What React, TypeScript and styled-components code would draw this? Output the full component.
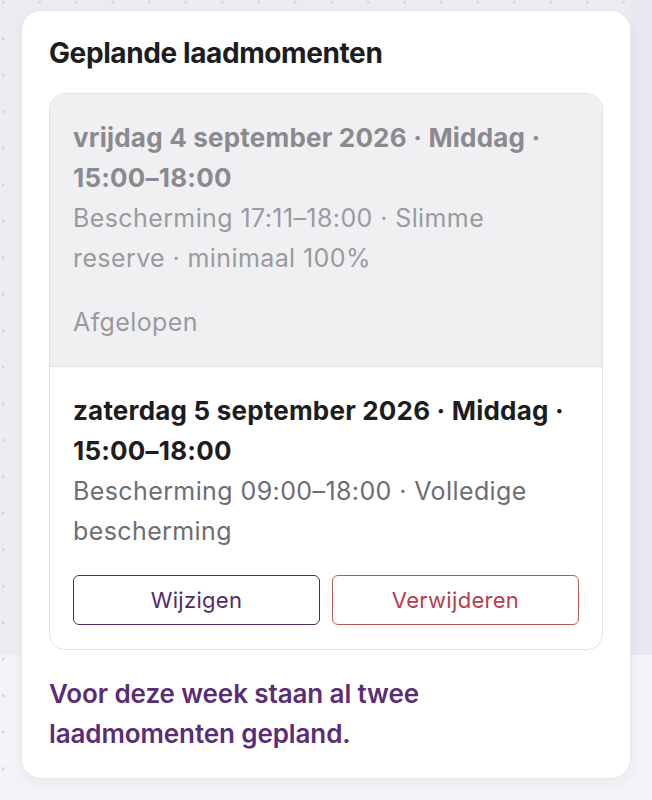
import styled, { createGlobalStyle } from "styled-components";

const GlobalStyle = createGlobalStyle`
  html, body {
    margin: 0;
    padding: 0;
  }

  body {
    font-family: Inter, "Noto Sans", "Liberation Sans", sans-serif;
    background-color: #efedf3;
    background-image:
      radial-gradient(circle, #d6d3dc 1.2px, transparent 1.6px),
      linear-gradient(to right, transparent 0, transparent 630px, #ebe7f1 632px),
      linear-gradient(to bottom, #eeecf2 0, #eeecf2 655px, #f4f3f7 655px);
    background-size: 36.5px 36.5px, 100% 655px, 100% 100%;
    background-repeat: repeat, no-repeat, no-repeat;
    background-position: -15px -16px, 0 0, 0 0;
    min-height: 800px;
  }
`;

interface Moment {
  title: string;
  detail: string;
  status?: string;
  past?: boolean;
}

const moments: Moment[] = [
  {
    title: "vrijdag 4 september 2026 · Middag · 15:00–18:00",
    detail: "Bescherming 17:11–18:00 · Slimme reserve · minimaal 100%",
    status: "Afgelopen",
    past: true,
  },
  {
    title: "zaterdag 5 september 2026 · Middag · 15:00–18:00",
    detail: "Bescherming 09:00–18:00 · Volledige bescherming",
  },
];

export default function App() {
  return (
    <>
      <GlobalStyle />
      <Page>
        <Card>
          <CardTitle>Geplande laadmomenten</CardTitle>

          <MomentList>
            {moments.map((moment) => (
              <MomentItem key={moment.title} $past={moment.past}>
                <MomentTitle $past={moment.past}>{moment.title}</MomentTitle>
                <MomentDetail $past={moment.past}>{moment.detail}</MomentDetail>

                {moment.status && <MomentStatus>{moment.status}</MomentStatus>}

                {!moment.past && (
                  <MomentActions>
                    <ActionButton $variant="edit">Wijzigen</ActionButton>
                    <ActionButton $variant="delete">Verwijderen</ActionButton>
                  </MomentActions>
                )}
              </MomentItem>
            ))}
          </MomentList>

          <WeekNotice>Voor deze week staan al twee laadmomenten gepland.</WeekNotice>
        </Card>
      </Page>
    </>
  );
}

const Page = styled.main`
  padding: 10px 21px;
`;

const Card = styled.section`
  background: #ffffff;
  border: 1px solid #e7e5ec;
  border-radius: 20px;
  box-shadow: 0 4px 14px rgba(60, 40, 90, 0.05);
  padding: 25px 27px 24px;
`;

const CardTitle = styled.h2`
  margin: 0 0 23px;
  font-size: 28px;
  line-height: 34px;
  font-weight: 700;
  color: #1d1d1f;
  letter-spacing: -0.4px;
`;

const MomentList = styled.ul`
  list-style: none;
  margin: 0;
  padding: 0;
  border: 1px solid #e2e1e5;
  border-radius: 16px;
  overflow: hidden;
`;

const MomentItem = styled.li<{ $past?: boolean }>`
  padding: 24px 23px;
  background: ${(p) => (p.$past ? "#f0f0f3" : "#ffffff")};
  display: flex;
  flex-direction: column;

  & + & {
    border-top: 1px solid #e2e1e5;
  }
`;

const MomentTitle = styled.h3<{ $past?: boolean }>`
  margin: 0;
  max-width: 500px;
  font-size: 26px;
  line-height: 40px;
  font-weight: 700;
  letter-spacing: 0.2px;
  color: ${(p) => (p.$past ? "#8a8a8f" : "#1d1d1f")};
`;

const MomentDetail = styled.p<{ $past?: boolean }>`
  margin: 0;
  max-width: 500px;
  font-size: 25px;
  line-height: 40px;
  font-weight: 400;
  letter-spacing: 0.4px;
  color: ${(p) => (p.$past ? "#9a9a9f" : "#6d6d72")};
`;

const MomentStatus = styled.p`
  margin: 24px 0 0;
  font-size: 25px;
  line-height: 40px;
  letter-spacing: 0.4px;
  color: #9a9a9f;
`;

const MomentActions = styled.div`
  margin-top: 24px;
  display: grid;
  grid-template-columns: 1fr 1fr;
  gap: 12px;
`;

const ActionButton = styled.button<{ $variant: "edit" | "delete" }>`
  height: 50px;
  border-radius: 6px;
  background: #ffffff;
  font-family: inherit;
  font-size: 22px;
  font-weight: 400;
  letter-spacing: 0.3px;
  cursor: pointer;
  border: 1.5px solid ${(p) => (p.$variant === "edit" ? "#4e2c6b" : "#bd5560")};
  color: ${(p) => (p.$variant === "edit" ? "#4e2c6b" : "#b3404b")};
`;

const WeekNotice = styled.p`
  margin: 24px 0 0;
  max-width: 480px;
  font-size: 26px;
  line-height: 40px;
  font-weight: 600;
  letter-spacing: -0.1px;
  color: #5a2d74;
`;
